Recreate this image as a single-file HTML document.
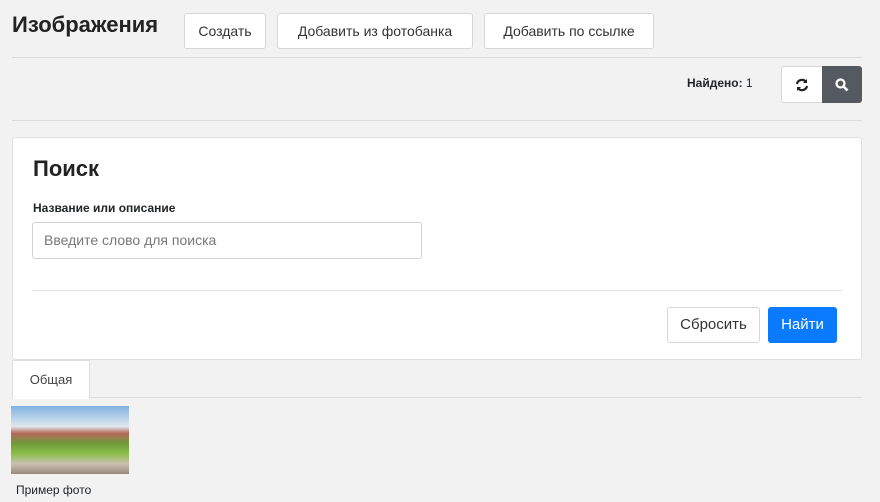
<!DOCTYPE html>
<html><head><meta charset="utf-8"><style>
body{margin:0;width:880px;height:502px;background:#f2f2f2;font-family:"Liberation Sans",sans-serif;color:#212529;position:relative;overflow:hidden}
.a{position:absolute}
.btn{position:absolute;background:#fff;border:1px solid #d6d6d6;border-radius:3px;font-size:14px;color:#333;text-align:center;box-sizing:border-box}
.hr{position:absolute;left:12px;width:850px;height:1px;background:#dcdcdc}
</style></head><body>
<div class="a" style="left:12px;top:12px;font-size:22px;font-weight:bold;color:#222">Изображения</div>
<div class="btn" style="left:184px;top:13px;width:82px;height:36px;line-height:34px">Создать</div>
<div class="btn" style="left:277px;top:13px;width:196px;height:36px;line-height:34px">Добавить из фотобанка</div>
<div class="btn" style="left:484px;top:13px;width:170px;height:36px;line-height:34px">Добавить по ссылке</div>
<div class="hr" style="top:57px"></div>
<div class="a" style="left:687px;top:76px;font-size:12px"><b>Найдено:</b> 1</div>
<div class="btn" style="left:781px;top:66px;width:42px;height:37px;border-radius:3px 0 0 3px">
<svg width="16" height="16" viewBox="0 0 16 16" style="margin-top:10px"><path d="M3 7a5 5 0 0 1 9-2M13 9a5 5 0 0 1-9 2" fill="none" stroke="#222" stroke-width="2.2"/><path d="M13 2v4h-4z M3 14v-4h4z" fill="#222"/></svg></div>
<div class="a" style="left:822px;top:66px;width:40px;height:37px;background:#555a60;border-radius:0 3px 3px 0">
<svg width="16" height="16" viewBox="0 0 16 16" style="margin:11px 0 0 12px"><circle cx="6.5" cy="6.5" r="4" fill="none" stroke="#fff" stroke-width="2.2"/><path d="M9.5 9.5l4 4" stroke="#fff" stroke-width="2.6"/></svg></div>
<div class="hr" style="top:120px"></div>
<div class="a" style="left:12px;top:137px;width:848px;height:221px;background:#fff;border:1px solid #e0e0e0;border-radius:3px">
<div class="a" style="left:20px;top:18px;font-size:22px;font-weight:bold;color:#222">Поиск</div>
<div class="a" style="left:20px;top:63px;font-size:12px;font-weight:bold">Название или описание</div>
<div class="a" style="left:19px;top:84px;width:390px;height:37px;box-sizing:border-box;border:1px solid #d0d0d0;border-radius:3px;font-size:14px;color:#777;line-height:35px;padding-left:11px">Введите слово для поиска</div>
<div class="a" style="left:19px;top:152px;width:810px;height:1px;background:#e0e0e0"></div>
<div class="btn" style="left:654px;top:169px;width:93px;height:36px;line-height:34px;font-size:15px">Сбросить</div>
<div class="a" style="left:755px;top:169px;width:69px;height:36px;background:#0a7bff;border-radius:3px;color:#fff;font-size:15px;line-height:36px;text-align:center">Найти</div>
</div>
<div class="hr" style="top:397px"></div>
<div class="a" style="left:12px;top:360px;width:76px;height:38px;background:#fff;border:1px solid #e0e0e0;border-bottom:none;font-size:13px;color:#444;text-align:center;line-height:38px">Общая</div>
<div class="a" style="left:11px;top:406px;width:118px;height:68px;background:linear-gradient(#7fb2e0 0%,#dfe8ee 30%,#b5695a 40%,#6f9a3a 55%,#8cbf4a 70%,#c9c0b0 85%,#9a8a80 100%)"></div>
<div class="a" style="left:16px;top:483px;font-size:12px">Пример фото</div>
</body></html>
